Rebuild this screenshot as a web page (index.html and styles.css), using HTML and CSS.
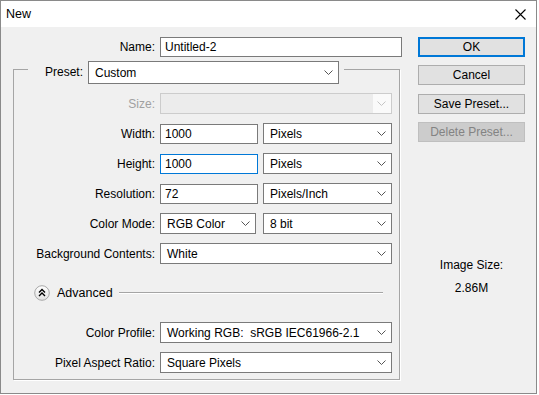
FILE: index.html
```html
<!doctype html>
<html>
<head>
    <title>New</title>
    <link rel="stylesheet" href="styles.css">
</head>

<body>
    <div class="window">
        <div class="titlebar">
            <span class="title">New</span>
            <svg class="close" width="11" height="11" viewBox="0 0 11 11">
                <path d="M0.5 0.5 L10.5 10.5 M10.5 0.5 L0.5 10.5" stroke="#000" stroke-width="1.1" fill="none"/>
            </svg>
        </div>

        <div class="content">
            <div class="form">
                <!-- name -->
                <div class="name-row">
                    <label class="name-label">Name:</label>
                    <div class="field name-field">Untitled-2</div>
                </div>

                <fieldset class="group">
                    <legend class="preset">
                        <label class="preset-label">Preset:</label>
                        <div class="field select preset-select">
                            <span>Custom</span>
                            <svg class="chev" width="9" height="5" viewBox="0 0 9 5"><polyline points="0.5,0.5 4.5,4.5 8.5,0.5" stroke="#555" fill="none"/></svg>
                        </div>
                    </legend>

                    <div class="row first">
                        <label class="lbl disabled">Size:</label>
                        <div class="field select w-full off">
                            <span></span>
                            <div class="arrow-zone">
                                <svg class="chev" width="9" height="5" viewBox="0 0 9 5"><polyline points="0.5,0.5 4.5,4.5 8.5,0.5" stroke="#c4c4c4" fill="none"/></svg>
                            </div>
                        </div>
                    </div>

                    <div class="row">
                        <label class="lbl">Width:</label>
                        <div class="field w-num">1000</div>
                        <div class="field select w-unit gap5">
                            <span>Pixels</span>
                            <svg class="chev" width="9" height="5" viewBox="0 0 9 5"><polyline points="0.5,0.5 4.5,4.5 8.5,0.5" stroke="#555" fill="none"/></svg>
                        </div>
                    </div>

                    <div class="row">
                        <label class="lbl">Height:</label>
                        <div class="field w-num focus">1000</div>
                        <div class="field select w-unit gap5">
                            <span>Pixels</span>
                            <svg class="chev" width="9" height="5" viewBox="0 0 9 5"><polyline points="0.5,0.5 4.5,4.5 8.5,0.5" stroke="#555" fill="none"/></svg>
                        </div>
                    </div>

                    <div class="row">
                        <label class="lbl">Resolution:</label>
                        <div class="field w-num">72</div>
                        <div class="field select w-unit gap5">
                            <span>Pixels/Inch</span>
                            <svg class="chev" width="9" height="5" viewBox="0 0 9 5"><polyline points="0.5,0.5 4.5,4.5 8.5,0.5" stroke="#555" fill="none"/></svg>
                        </div>
                    </div>

                    <div class="row">
                        <label class="lbl">Color Mode:</label>
                        <div class="field select w-mode">
                            <span>RGB Color</span>
                            <svg class="chev" width="9" height="5" viewBox="0 0 9 5"><polyline points="0.5,0.5 4.5,4.5 8.5,0.5" stroke="#555" fill="none"/></svg>
                        </div>
                        <div class="field select w-unit gap7">
                            <span>8 bit</span>
                            <svg class="chev" width="9" height="5" viewBox="0 0 9 5"><polyline points="0.5,0.5 4.5,4.5 8.5,0.5" stroke="#555" fill="none"/></svg>
                        </div>
                    </div>

                    <div class="row">
                        <label class="lbl">Background Contents:</label>
                        <div class="field select w-full">
                            <span>White</span>
                            <svg class="chev" width="9" height="5" viewBox="0 0 9 5"><polyline points="0.5,0.5 4.5,4.5 8.5,0.5" stroke="#555" fill="none"/></svg>
                        </div>
                    </div>

                    <!-- advanced -->
                    <div class="advanced">
                        <svg class="adv-icon" width="16" height="16" viewBox="0 0 16 16">
                            <defs>
                                <linearGradient id="advfill" x1="0" y1="0" x2="0" y2="1">
                                    <stop offset="0" stop-color="#ffffff"/>
                                    <stop offset="1" stop-color="#e2e2e2"/>
                                </linearGradient>
                            </defs>
                            <circle cx="8" cy="8" r="7.3" fill="url(#advfill)" stroke="#a8a8a8"/>
                            <polyline points="5,7.5 8,4.5 11,7.5" stroke="#000" stroke-width="1.4" fill="none"/>
                            <polyline points="5,11 8,8 11,11" stroke="#000" stroke-width="1.4" fill="none"/>
                        </svg>
                        <span class="adv-text">Advanced</span>
                        <div class="adv-line"></div>
                    </div>

                    <div class="row profile">
                        <label class="lbl">Color Profile:</label>
                        <div class="field select w-full">
                            <span>Working RGB:&nbsp; sRGB IEC61966-2.1</span>
                            <svg class="chev" width="9" height="5" viewBox="0 0 9 5"><polyline points="0.5,0.5 4.5,4.5 8.5,0.5" stroke="#555" fill="none"/></svg>
                        </div>
                    </div>

                    <div class="row">
                        <label class="lbl">Pixel Aspect Ratio:</label>
                        <div class="field select w-full">
                            <span>Square Pixels</span>
                            <svg class="chev" width="9" height="5" viewBox="0 0 9 5"><polyline points="0.5,0.5 4.5,4.5 8.5,0.5" stroke="#555" fill="none"/></svg>
                        </div>
                    </div>
                </fieldset>
            </div>

            <div class="side">
                <div class="btn default">OK</div>
                <div class="btn b2">Cancel</div>
                <div class="btn b3">Save Preset...</div>
                <div class="btn b2 btn-off">Delete Preset...</div>

                <div class="size-label">Image Size:</div>
                <div class="size-value">2.86M</div>
            </div>
        </div>
    </div>
</body>

</html>
```

FILE: styles.css
```css
html, body {
    margin: 0;
    background-color: #ffffff;
}

body {
    font-family: "Liberation Sans", Arial, sans-serif;
    font-size: 12px;
    color: #000;
}

.window {
    width: 537px;
    height: 394px;
    box-sizing: border-box;
    border: 1px solid #8a8a8a;
    background-color: #f0f0f0;
    display: flex;
    flex-direction: column;
}

.titlebar {
    height: 26px;
    flex: none;
    background-color: #ffffff;
    display: flex;
    align-items: center;
    justify-content: space-between;
    padding: 0 10px 0 5px;
}

.title {
    font-size: 12.5px;
}

.content {
    display: flex;
    padding-top: 10px;
}

.form {
    width: 405px;
}

/* name row */
.name-row {
    display: flex;
    align-items: center;
}

.name-label {
    width: 154px;
    margin-right: 5px;
    text-align: right;
}

.field {
    height: 21px;
    box-sizing: border-box;
    border: 1px solid #7a7a7a;
    background-color: #ffffff;
    padding: 0 4px;
    display: flex;
    align-items: center;
    white-space: nowrap;
}

.name-field {
    width: 242px;
    height: 20px;
}

.focus {
    border-color: #0078d7;
}

.select {
    padding: 0 0 0 6px;
}

.select .chev {
    margin-left: auto;
    margin-right: 5px;
    flex: none;
}

/* group box */
.group {
    width: 387px;
    box-sizing: border-box;
    margin: 4px 0 0 12px;
    padding: 15px 0 6px 0;
    border: 1px solid #a5a5a5;
    box-shadow: 1px 1px 0 #ffffff;
}

.preset {
    display: flex;
    align-items: flex-start;
    height: 17px;
    margin-left: 14px;
    padding: 0 5px 0 0;
}

.preset-label {
    width: 55px;
    line-height: 23px;
    text-align: right;
}

.preset-select {
    width: 251px;
    height: 23px;
    margin-left: 5px;
    flex: none;
}

.row {
    display: flex;
    align-items: center;
    height: 21px;
    margin-top: 9px;
}

.row.first {
    margin-top: 0;
}

.row.profile {
    margin-top: 22px;
}

.lbl {
    width: 141px;
    margin-right: 5px;
    text-align: right;
    flex: none;
    white-space: nowrap;
}

.lbl.disabled {
    color: #a0a0a0;
}

.w-full {
    width: 232px;
}

.w-num {
    width: 98px;
    height: 20px;
}

.w-unit {
    width: 129px;
}

.w-mode {
    width: 96px;
}

.gap5 {
    margin-left: 5px;
}

.gap7 {
    margin-left: 7px;
}

.off {
    border-color: #cccccc;
    background-color: #ececec;
}

.arrow-zone {
    margin-left: auto;
    width: 18px;
    height: 19px;
    background-color: #fafafa;
    display: flex;
    align-items: center;
}

.arrow-zone .chev {
    margin-left: 4px;
}

/* advanced */
.advanced {
    display: flex;
    align-items: center;
    height: 14px;
    margin-top: 22px;
    padding-left: 20px;
}

.adv-icon {
    flex: none;
}

.adv-text {
    margin-left: 7px;
    font-size: 12.5px;
}

.adv-line {
    flex: 1;
    height: 0;
    margin: 0 16px 0 6px;
    border-top: 1px solid #a5a5a5;
    border-bottom: 1px solid #ffffff;
}

/* buttons */
.side {
    width: 107px;
    margin-left: 12px;
    text-align: center;
}

.btn {
    height: 20px;
    box-sizing: border-box;
    border: 1px solid #adadad;
    background-color: #e1e1e1;
    line-height: 18px;
    text-align: center;
}

.btn.default {
    border: 2px solid #0078d7;
    line-height: 16px;
}

.b2 {
    margin-top: 8px;
}

.b3 {
    margin-top: 9px;
}

.btn-off {
    background-color: #cccccc;
    border-color: #bfbfbf;
    color: #838383;
}

.size-label {
    margin-top: 115px;
    line-height: 16px;
}

.size-value {
    margin-top: 7px;
    line-height: 16px;
}
```
